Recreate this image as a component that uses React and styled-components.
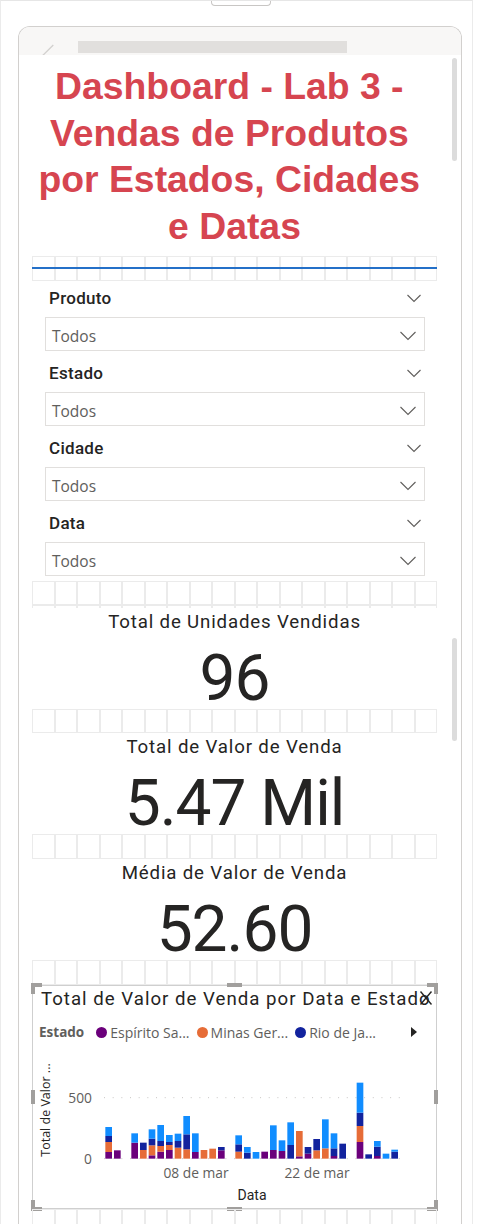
import React from 'react';
import styled, { createGlobalStyle } from 'styled-components';

const GlobalStyle = createGlobalStyle`
  html, body { margin: 0; padding: 0; background: #ffffff; }
  body { font-family: Roboto, "Open Sans", sans-serif; }
  #root { height: 1224px; }
`;

const Page = styled.div`
  width: 473px;
  height: 1224px;
  box-sizing: border-box;
  border-left: 1px solid #ebebeb;
  border-right: 1px solid #ebebeb;
  border-top: 1px solid #e6e6e6;
  overflow: hidden;
  display: flex;
  flex-direction: column;
`;

const Tab = styled.div`
  margin-left: 210px;
  width: 60px;
  height: 5px;
  box-sizing: border-box;
  border: 1px solid #c8c6c4;
  border-top: none;
  border-radius: 0 0 4px 4px;
  flex-shrink: 0;
`;

const Frame = styled.div`
  margin-top: 20px;
  margin-left: 17px;
  width: 444px;
  flex: 1;
  box-sizing: border-box;
  border: 1px solid #d2d0ce;
  border-bottom: none;
  border-radius: 12px 12px 0 0;
  overflow: hidden;
  display: flex;
  flex-direction: column;
`;

const FrameHeader = styled.div`
  height: 28px;
  flex-shrink: 0;
  background: #f8f7f6;
  display: flex;
  align-items: flex-start;
  overflow: hidden;
`;

const PenMark = styled.svg`
  margin-left: 23px;
  margin-top: 17px;
  flex-shrink: 0;
`;

const HeaderBar = styled.div`
  margin-left: 24px;
  margin-top: 14px;
  width: 269px;
  height: 12px;
  background: #e1dfdd;
`;

const Content = styled.div`
  flex: 1;
  display: flex;
  background: #ffffff;
`;

const Canvas = styled.div`
  margin-left: 13px;
  width: 405px;
  display: flex;
  flex-direction: column;
  flex-shrink: 0;
`;

const ScrollColumn = styled.div`
  margin-left: 15px;
  width: 5px;
  display: flex;
  flex-direction: column;
`;

const Thumb = styled.div`
  margin-top: ${p => p.$top}px;
  height: 103px;
  border-radius: 3px;
  background: #dcdcdc;
  flex-shrink: 0;
`;

const Title = styled.div`
  padding: 8px 0 6px;
  height: 201px;
  box-sizing: border-box;
  font-family: "Liberation Sans", Arial, sans-serif;
  font-weight: 700;
  font-size: 37.33px;
  line-height: 46.7px;
  color: #d64550;
  text-align: center;
`;

const TitleLine = styled.span`
  display: block;
  white-space: pre;
`;

const GridRow = styled.div`
  position: relative;
  height: ${p => p.$h}px;
  display: grid;
  grid-template-columns: repeat(18, 1fr);
  flex-shrink: 0;
`;

const Cell = styled.div`
  box-sizing: border-box;
  border: 1px solid #ebebeb;
  border-bottom-width: ${p => (p.$open ? 0 : 1)}px;
`;

const BlueLine = styled.div`
  position: absolute;
  left: 0;
  right: 0;
  top: 11px;
  height: 2px;
  background: #2470c8;
`;

const SlicerBlock = styled.div`
  height: 75px;
  display: flex;
  flex-direction: column;
  flex-shrink: 0;
`;

const SlicerHeader = styled.div`
  height: 36px;
  box-sizing: border-box;
  padding: 7px 16px 9px 17px;
  display: flex;
  align-items: center;
  justify-content: space-between;
`;

const SlicerLabel = styled.span`
  font-family: Roboto, sans-serif;
  font-weight: 500;
  font-size: 17px;
  line-height: 20px;
  letter-spacing: 0.3px;
  color: #252423;
`;

const SlicerBox = styled.div`
  margin: 0 12px 0 13px;
  height: 34px;
  box-sizing: border-box;
  border: 1px solid #e1dfdd;
  padding: 3px 8px 0 6px;
  display: flex;
  align-items: center;
  justify-content: space-between;
`;

const SlicerValue = styled.span`
  font-family: "Open Sans", sans-serif;
  font-size: 15.5px;
  color: #605e5c;
`;

const Card = styled.div`
  height: 101px;
  display: flex;
  flex-direction: column;
  align-items: center;
  flex-shrink: 0;
`;

const CardTitle = styled.div`
  margin-top: 3px;
  font-family: Roboto, sans-serif;
  font-size: 18.67px;
  line-height: 22px;
  letter-spacing: 0.85px;
  color: #252423;
  white-space: nowrap;
`;

const CardValue = styled.div`
  margin-top: 16px;
  font-family: Roboto, sans-serif;
  font-size: 64px;
  line-height: 60px;
  letter-spacing: -1px;
  color: #252423;
  white-space: nowrap;
`;

const Chart = styled.div`
  position: relative;
  height: 224px;
  box-sizing: border-box;
  border: 1px solid #cfcfcf;
  display: flex;
  flex-direction: column;
  flex-shrink: 0;
`;

const ChartTitle = styled.div`
  padding: 2px 0 0 8px;
  font-family: Roboto, sans-serif;
  font-size: 18.67px;
  line-height: 22px;
  letter-spacing: 1px;
  color: #252423;
  white-space: nowrap;
  overflow: hidden;
`;

const CloseIcon = styled.svg`
  position: absolute;
  left: 386px;
  top: 4px;
`;

const Handle = styled.div`
  position: absolute;
  background: #a19f9d;
  ${p => p.$css}
`;

const Legend = styled.div`
  margin-top: 12px;
  height: 20px;
  padding: 0 19px 0 6px;
  display: flex;
  align-items: center;
  font-family: "Open Sans", sans-serif;
  font-size: 14px;
  color: #605e5c;
  white-space: nowrap;
`;

const LegendTitle = styled.span`
  font-weight: 700;
  font-size: 13.5px;
  margin-right: 12px;
`;

const LegendItem = styled.span`
  display: flex;
  align-items: center;
  margin-right: 7px;
`;

const Dot = styled.span`
  width: 11px;
  height: 11px;
  border-radius: 50%;
  background: ${p => p.$c};
  margin-right: 3px;
  flex-shrink: 0;
`;

const LegendArrow = styled.span`
  margin-left: auto;
  width: 0;
  height: 0;
  border-top: 5.5px solid transparent;
  border-bottom: 5.5px solid transparent;
  border-left: 6px solid #252423;
`;

const Plot = styled.svg`
  margin-top: auto;
  display: block;
  flex-shrink: 0;
`;

const Chevron = ({ w, h }) => (
  <svg width={w} height={h + 2} viewBox={`0 0 ${w} ${h + 2}`}>
    <polyline points={`0.5,1 ${w / 2},${h + 0.5} ${w - 0.5},1`} fill="none" stroke="#605e5c" strokeWidth="1.1" />
  </svg>
);

const Grid = ({ h, open, children }) => (
  <GridRow $h={h}>
    {Array.from({ length: 18 }).map((_, i) => (
      <Cell key={i} $open={open} />
    ))}
    {children}
  </GridRow>
);

const Slicer = ({ label }) => (
  <SlicerBlock>
    <SlicerHeader>
      <SlicerLabel>{label}</SlicerLabel>
      <Chevron w={14} h={7} />
    </SlicerHeader>
    <SlicerBox>
      <SlicerValue>Todos</SlicerValue>
      <Chevron w={16} h={8} />
    </SlicerBox>
  </SlicerBlock>
);

const KpiCard = ({ title, value }) => (
  <Card>
    <CardTitle>{title}</CardTitle>
    <CardValue>{value}</CardValue>
  </Card>
);

const COLORS = { P: '#6b007b', O: '#e66c37', D: '#12239e', L: '#118dff' };

const BARS = [
  [['P', 20], ['O', 30], ['D', 18], ['L', 27]],
  [['P', 25]],
  [],
  [['P', 48], ['L', 28]],
  [['O', 26], ['D', 22]],
  [['P', 10], ['O', 30], ['D', 20], ['L', 28]],
  [['P', 21], ['O', 17], ['D', 15], ['L', 48]],
  [['P', 26], ['O', 15], ['D', 9], ['L', 21]],
  [['O', 33], ['D', 20], ['L', 22]],
  [['O', 28], ['D', 45], ['L', 55]],
  [['P', 20], ['L', 56]],
  [['O', 26]],
  [['O', 30]],
  [['P', 25], ['D', 10]],
  [],
  [['O', 21], ['D', 22], ['L', 27]],
  [['D', 18], ['L', 17]],
  [['L', 20]],
  [['P', 21]],
  [['P', 26], ['L', 74]],
  [['P', 23], ['L', 32]],
  [['D', 41], ['L', 68]],
  [['P', 7], ['O', 76]],
  [['P', 15], ['D', 20]],
  [['O', 25], ['D', 34]],
  [['O', 31], ['L', 87]],
  [['P', 8], ['D', 23], ['L', 45]],
  [['D', 45]],
  [],
  [['P', 50], ['O', 48], ['D', 40], ['L', 90]],
  [['D', 13]],
  [['P', 8], ['D', 28], ['L', 17]],
  [['L', 15]],
  [['D', 21], ['L', 6]],
];

const BASE = 263 / 3 + 24;

const ChartPlot = () => {
  const rects = [];
  BARS.forEach((segs, i) => {
    const x = (316 + 26 * i) / 3 - 33;
    let y = BASE;
    segs.forEach(([c, h3], j) => {
      const h = h3 / 3;
      y -= h;
      rects.push(<rect key={`${i}-${j}`} x={x} y={y} width={20 / 3} height={h} fill={COLORS[c]} />);
    });
  });
  return (
    <Plot width="403" height="161" viewBox="0 0 403 161">
      <line x1="71" y1={80 / 3 + 24} x2="367" y2={80 / 3 + 24} stroke="#c8c6c4" strokeWidth="1" strokeDasharray="1 7.67" />
      <line x1="71" y1={BASE} x2="367" y2={BASE} stroke="#c8c6c4" strokeWidth="1" strokeDasharray="1 7.67" />
      {rects}
      <g fontFamily="'Open Sans', sans-serif" fontSize="13.8" fill="#605e5c">
        <text x="59" y={80 / 3 + 24 + 5} textAnchor="end">500</text>
        <text x="59" y={BASE + 5} textAnchor="end">0</text>
        <text x="163" y="130.5" textAnchor="middle">08 de mar</text>
        <text x="284" y="130.5" textAnchor="middle">22 de mar</text>
      </g>
      <text transform="translate(17,63) rotate(-90)" textAnchor="middle" fontFamily="'Open Sans', sans-serif" fontSize="12.5" fill="#252423">Total de Valor ...</text>
      <text x="219" y="153" textAnchor="middle" fontFamily="Roboto, sans-serif" fontSize="14" fill="#252423">Data</text>
    </Plot>
  );
};

const handles = [
  'left:-2px; top:-3px; width:11px; height:4px;',
  'left:-2px; top:-3px; width:4px; height:11px;',
  'right:-2px; top:-3px; width:11px; height:4px;',
  'right:-2px; top:-3px; width:4px; height:11px;',
  'left:194px; top:-3px; width:15px; height:4px;',
  'left:-2px; bottom:-3px; width:11px; height:4px;',
  'left:-2px; bottom:-3px; width:4px; height:11px;',
  'right:-2px; bottom:-3px; width:11px; height:4px;',
  'right:-2px; bottom:-3px; width:4px; height:11px;',
  'left:194px; bottom:-3px; width:15px; height:4px;',
  'left:-2px; top:104px; width:4px; height:14px;',
  'right:-2px; top:104px; width:4px; height:14px;',
];

const SalesChart = () => (
  <Chart>
    <ChartTitle>Total de Valor de Venda por Data e Estado</ChartTitle>
    <CloseIcon width="14" height="16" viewBox="0 0 14 16">
      <line x1="1.5" y1="1.5" x2="12.5" y2="14.5" stroke="#252423" strokeWidth="1.4" />
      <line x1="12.5" y1="1.5" x2="1.5" y2="14.5" stroke="#252423" strokeWidth="1.4" />
    </CloseIcon>
    <Legend>
      <LegendTitle>Estado</LegendTitle>
      <LegendItem><Dot $c="#6b007b" />Espírito Sa...</LegendItem>
      <LegendItem><Dot $c="#e66c37" />Minas Ger...</LegendItem>
      <LegendItem><Dot $c="#12239e" />Rio de Ja...</LegendItem>
      <LegendArrow />
    </Legend>
    <ChartPlot />
    {handles.map((h, i) => (
      <Handle key={i} $css={h} />
    ))}
  </Chart>
);

export default function App() {
  return (
    <>
      <GlobalStyle />
      <Page>
        <Tab />
        <Frame>
          <FrameHeader>
            <PenMark width="12" height="12" viewBox="0 0 12 12">
              <line x1="0.7" y1="11.5" x2="11.3" y2="1" stroke="#d2d0ce" strokeWidth="1.3" />
            </PenMark>
            <HeaderBar />
          </FrameHeader>
          <Content>
            <Canvas>
              <Title>
                <TitleLine>{'Dashboard - Lab 3 - '}</TitleLine>
                <TitleLine>{'Vendas de Produtos '}</TitleLine>
                <TitleLine>{'por Estados, Cidades '}</TitleLine>
                <TitleLine>e Datas</TitleLine>
              </Title>
              <Grid h={25}>
                <BlueLine />
              </Grid>
              <Slicer label="Produto" />
              <Slicer label="Estado" />
              <Slicer label="Cidade" />
              <Slicer label="Data" />
              <Grid h={24} />
              <Grid h={3} open />
              <KpiCard title="Total de Unidades Vendidas" value="96" />
              <Grid h={24} />
              <KpiCard title="Total de Valor de Venda" value="5.47 Mil" />
              <Grid h={25} />
              <KpiCard title="Média de Valor de Venda" value="52.60" />
              <Grid h={25} />
              <SalesChart />
              <Grid h={30} open />
            </Canvas>
            <ScrollColumn>
              <Thumb $top={3} />
              <Thumb $top={477} />
            </ScrollColumn>
          </Content>
        </Frame>
      </Page>
    </>
  );
}
